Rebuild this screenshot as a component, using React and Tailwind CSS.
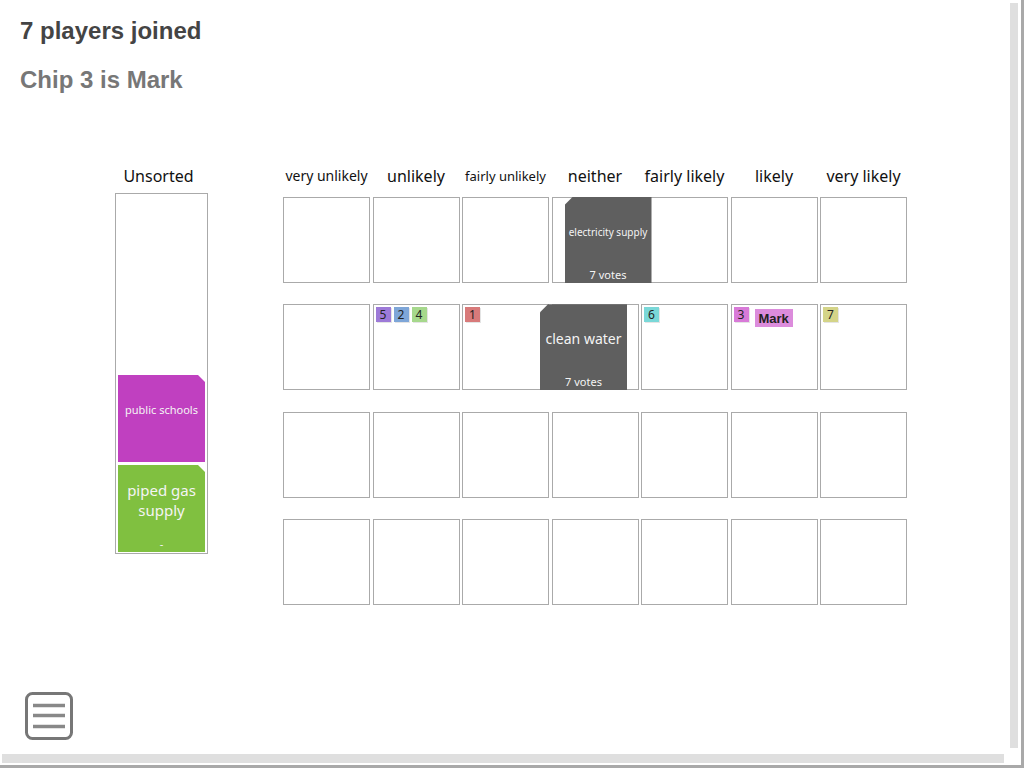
const columns = [
  { label: "very unlikely", size: "text-[14px]" },
  { label: "unlikely", size: "text-[16px]" },
  { label: "fairly unlikely", size: "text-[13px]" },
  { label: "neither", size: "text-[16px]" },
  { label: "fairly likely", size: "text-[16px]" },
  { label: "likely", size: "text-[16px]" },
  { label: "very likely", size: "text-[16px]" },
];

function Chip({ n, color }) {
  return (
    <div
      className={`w-[15px] h-[15px] ${color} text-[12px] leading-[15px] text-center text-[#222] shadow-[1px_1px_0_#e4e4e4]`}
    >
      {n}
    </div>
  );
}

function Card({ color, className = "", corner = "left", children, votes, tall = false }) {
  const clip =
    corner === "left"
      ? "[clip-path:polygon(8px_0,100%_0,100%_100%,0_100%,0_8px)]"
      : "[clip-path:polygon(0_0,calc(100%-7px)_0,100%_7px,100%_100%,0_100%)]";
  return (
    <div
      className={`w-[87px] ${tall ? "h-[87px]" : "h-[86px]"} ${color} ${clip} flex flex-col text-[#f4f4f4] ${className}`}
    >
      <div className="h-[70px] flex items-center justify-center text-center px-1">{children}</div>
      <div className="mt-auto h-[16px] leading-[16px] text-[11px] text-center">{votes}</div>
    </div>
  );
}

function Cell({ children }) {
  return <div className="relative w-[87px] h-[86px] border border-[#aaaaaa] bg-white">{children}</div>;
}

export default function App() {
  return (
    <div className="w-[1024px] h-[768px] flex flex-col bg-white border-r-[3px] border-b-[3px] border-[#a9a9a9] overflow-hidden font-['Noto_Sans',sans-serif]">
      <div className="flex h-[753px]">
        <div className="flex-1 flex flex-col pl-[20px] pt-[17px] pb-[13px]">
          <h1 className="font-['Liberation_Sans',Arial,sans-serif] font-bold text-[24px] leading-[28px] text-[#444]">
            7 players joined
          </h1>
          <h2 className="mt-[21px] font-['Liberation_Sans',Arial,sans-serif] font-bold text-[24px] leading-[28px] text-[#777]">
            Chip 3 is Mark
          </h2>

          <div className="flex mt-[71px]">
            <div className="ml-[95px] w-[93px] flex flex-col">
              <div className="h-[22px] leading-[22px] text-center text-[16px] text-[#111] pr-[6px]">Unsorted</div>
              <div className="mt-[6px] h-[361px] border border-[#aaaaaa] flex flex-col justify-end gap-[3px] pl-[2px] pb-[1px]">
                <Card color="bg-[#c040c0]" corner="right" votes="" tall>
                  <span className="text-[11px] leading-[14px]">public schools</span>
                </Card>
                <Card color="bg-[#80c040]" corner="right" votes="-" tall>
                  <span className="text-[15px] leading-[20px]">piped gas supply</span>
                </Card>
              </div>
            </div>

            <div className="ml-[75px] flex flex-col">
              <div className="grid grid-cols-[repeat(7,87px)] gap-x-[2.5px]">
                {columns.map((c) => (
                  <div key={c.label} className={`h-[22px] leading-[22px] text-center whitespace-nowrap text-[#111] ${c.size}`}>
                    {c.label}
                  </div>
                ))}
              </div>
              <div className="mt-[10px] grid grid-cols-[repeat(7,87px)] gap-x-[2.5px] gap-y-[21.3px]">
                {/* row 1 */}
                <Cell />
                <Cell />
                <Cell />
                <Cell>
                  <Card color="bg-[#5f5f5f]" className="absolute left-[12px] top-[-1px] z-10" votes="7 votes">
                    <span className="text-[10px] leading-[13px]">electricity supply</span>
                  </Card>
                </Cell>
                <Cell />
                <Cell />
                <Cell />

                {/* row 2 */}
                <Cell />
                <Cell>
                  <div className="flex gap-[3px] pl-[2px] pt-[2px]">
                    <Chip n="5" color="bg-[#9d7ad8]" />
                    <Chip n="2" color="bg-[#7ea6d8]" />
                    <Chip n="4" color="bg-[#a6d88c]" />
                  </div>
                </Cell>
                <Cell>
                  <div className="flex pl-[2px] pt-[2px]">
                    <Chip n="1" color="bg-[#d87a7a]" />
                  </div>
                  <Card color="bg-[#5f5f5f]" className="absolute left-[77px] top-[-1px] z-10" votes="7 votes">
                    <span className="text-[14px] leading-[18px]">clean water</span>
                  </Card>
                </Cell>
                <Cell />
                <Cell>
                  <div className="flex pl-[2px] pt-[2px]">
                    <Chip n="6" color="bg-[#7ad8d8]" />
                  </div>
                </Cell>
                <Cell>
                  <div className="flex items-start pl-[2px] pt-[2px]">
                    <Chip n="3" color="bg-[#d87ad8]" />
                    <div className="ml-[6px] mt-[2px] h-[18px] px-[4px] bg-[#dc8cdc] font-['Liberation_Sans',Arial,sans-serif] font-bold text-[13px] leading-[19px] text-[#222]">
                      Mark
                    </div>
                  </div>
                </Cell>
                <Cell>
                  <div className="flex pl-[2px] pt-[2px]">
                    <Chip n="7" color="bg-[#d4d488]" />
                  </div>
                </Cell>

                {/* rows 3-4 */}
                {Array.from({ length: 14 }).map((_, i) => (
                  <Cell key={i} />
                ))}
              </div>
            </div>
          </div>

          <div className="mt-auto ml-[5px]">
            <svg width="48" height="48" viewBox="0 0 48 48">
              <rect x="1.5" y="1.5" width="45" height="45" rx="6" fill="none" stroke="#777" strokeWidth="3" />
              <line x1="8" y1="13.5" x2="40" y2="13.5" stroke="#888" strokeWidth="3.5" />
              <line x1="8" y1="23.5" x2="40" y2="23.5" stroke="#888" strokeWidth="3.5" />
              <line x1="8" y1="34.5" x2="40" y2="34.5" stroke="#888" strokeWidth="3.5" />
            </svg>
          </div>
        </div>
        <div className="w-[13px] pt-[3px] pb-[5px] pl-[2px]">
          <div className="w-[8px] h-full bg-[#dfdfdf]" />
        </div>
      </div>
      <div className="flex-1 pl-[2px] pt-[1px]">
        <div className="w-[1002px] h-[9px] bg-[#dfdfdf]" />
      </div>
    </div>
  );
}
